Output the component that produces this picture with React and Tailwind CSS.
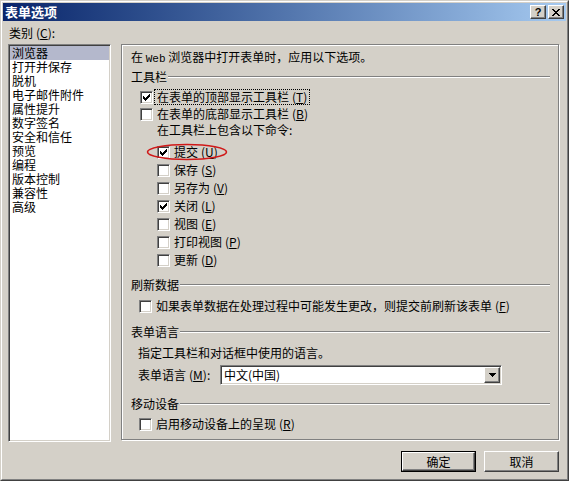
import React from 'react';

const sunken =
  'border border-t-[#808080] border-l-[#808080] border-r-white border-b-white shadow-[inset_1px_1px_0_#404040,inset_-1px_-1px_0_#d4d0c8]';
const raised =
  'border border-t-white border-l-white border-r-[#404040] border-b-[#404040] shadow-[inset_-1px_-1px_0_#808080,inset_1px_1px_0_#d4d0c8]';

const CheckMark = () => (
  <svg width="7" height="7" viewBox="0 0 7 7" shapeRendering="crispEdges">
    <path
      fill="#000"
      d="M6 0h1v1H6z M5 1h2v1H5z M0 2h1v1H0z M4 2h3v1H4z M0 3h2v1H0z M3 3h3v1H3z M0 4h5v1H0z M1 5h3v1H1z M2 6h1v1H2z"
    />
  </svg>
);

const Box = ({ checked }) => (
  <span className={`w-[13px] h-[13px] bg-white flex items-center justify-center shrink-0 ${sunken}`}>
    {checked && <CheckMark />}
  </span>
);

const Key = ({ k }) => (
  <span className="ml-[3px]">
    (<span className="underline underline-offset-[1px]">{k}</span>)
  </span>
);

const CheckRow = ({ checked, label, k, className = '', focus = false, children }) => (
  <div className={`relative h-[16px] flex items-center ${className}`}>
    {children}
    <Box checked={checked} />
    <span
      className={`ml-[2px] px-[2px] leading-[14px] whitespace-nowrap ${
        focus ? 'outline outline-1 outline-dotted outline-black' : ''
      }`}
    >
      {label}
      <Key k={k} />
    </span>
  </div>
);

const Heading = ({ text, className = '' }) => (
  <div className={`h-[14px] flex items-center ${className}`}>
    <span className="leading-[14px] whitespace-nowrap">{text}</span>
    <div className="flex-1 ml-[1px] border-t border-t-[#808080] border-b border-b-white" />
  </div>
);

const categories = [
  '浏览器',
  '打开并保存',
  '脱机',
  '电子邮件附件',
  '属性提升',
  '数字签名',
  '安全和信任',
  '预览',
  '编程',
  '版本控制',
  '兼容性',
  '高级',
];

const commands = [
  { label: '保存', k: 'S', checked: false },
  { label: '另存为', k: 'V', checked: false },
  { label: '关闭', k: 'L', checked: true },
  { label: '视图', k: 'E', checked: false },
  { label: '打印视图', k: 'P', checked: false },
  { label: '更新', k: 'D', checked: false },
];

export default function App() {
  return (
    <div className="w-[569px] h-[481px] bg-[#d4d0c8] border border-t-[#d4d0c8] border-l-[#d4d0c8] border-r-[#404040] border-b-[#404040] text-[12px] text-black font-['Noto_Sans_CJK_SC',sans-serif] select-none">
      <div className="h-full border border-t-white border-l-white border-r-[#808080] border-b-[#808080] p-[1px] flex flex-col">
        {/* title bar */}
        <div className="h-[18px] shrink-0 flex items-center pl-[2px] pr-[2px] bg-gradient-to-r from-[#0a246a] to-[#a6caf0]">
          <span className="text-white font-bold text-[13px] leading-[14px]">表单选项</span>
          <div className="ml-auto flex items-center">
            <div className={`w-[16px] h-[14px] bg-[#d4d0c8] flex items-center justify-center ${raised}`}>
              <span className="font-['Liberation_Sans',sans-serif] font-bold text-[11px] leading-[10px] text-black">?</span>
            </div>
            <div className={`ml-[2px] w-[16px] h-[14px] bg-[#d4d0c8] flex items-center justify-center ${raised}`}>
              <svg width="8" height="7" viewBox="0 0 8 7" shapeRendering="crispEdges">
                <path
                  fill="#000"
                  d="M0 0h2v1H0z M6 0h2v1H6z M1 1h2v1H1z M5 1h2v1H5z M2 2h4v1H2z M3 3h2v1H3z M2 4h4v1H2z M1 5h2v1H1z M5 5h2v1H5z M0 6h2v1H0z M6 6h2v1H6z"
                />
              </svg>
            </div>
          </div>
        </div>

        {/* body */}
        <div className="flex pl-[5px]">
          <div className="w-[103px] shrink-0">
            <div className="mt-[5px] h-[14px] leading-[14px] pl-[1px]">
              类别<Key k="C" />:
            </div>
            <div className={`mt-[4px] h-[398px] bg-white p-[1px] ${sunken}`}>
              {categories.map((c, i) => (
                <div
                  key={c}
                  className={`h-[14px] leading-[14px] pl-[2px] ${i === 0 ? 'bg-[#b4b8cc]' : ''}`}
                >
                  {c}
                </div>
              ))}
            </div>
          </div>

          <div className="ml-[10px] mt-[23px] w-[438px] h-[396px] border border-[#808080] shadow-[inset_1px_1px_0_#fff,1px_1px_0_#fff] pl-[9px] pr-[8px] pt-[5px]">
            <div className="h-[14px] leading-[14px] whitespace-nowrap">
              在 <span className="font-['Liberation_Mono',monospace] text-[11px]">Web</span> 浏览器中打开表单时，应用以下选项。
            </div>

            <Heading text="工具栏" className="mt-[6px]" />
            <CheckRow checked label="在表单的顶部显示工具栏" k="T" focus className="ml-[9px] mt-[5px]" />
            <CheckRow label="在表单的底部显示工具栏" k="B" className="ml-[9px] mt-[1px]" />
            <div className="ml-[26px] mt-[1px] h-[14px] leading-[14px]">在工具栏上包含以下命令:</div>

            <CheckRow checked label="提交" k="U" className="ml-[26px] mt-[7px]">
              <svg
                className="absolute left-[-11px] top-[-1px] pointer-events-none"
                width="82"
                height="18"
                viewBox="0 0 82 18"
              >
                <ellipse cx="41" cy="9" rx="39.5" ry="7.5" fill="none" stroke="#d01818" strokeWidth="1.6" />
              </svg>
            </CheckRow>
            {commands.map((c) => (
              <CheckRow
                key={c.label}
                checked={c.checked}
                label={c.label}
                k={c.k}
                className="ml-[26px] mt-[2px]"
              />
            ))}

            <Heading text="刷新数据" className="mt-[10px]" />
            <CheckRow
              label="如果表单数据在处理过程中可能发生更改，则提交前刷新该表单"
              k="F"
              className="ml-[8px] mt-[6px]"
            />

            <Heading text="表单语言" className="mt-[11px]" />
            <div className="ml-[7px] mt-[7px] h-[14px] leading-[14px]">指定工具栏和对话框中使用的语言。</div>
            <div className="ml-[7px] mt-[5px] h-[20px] flex items-center">
              <span className="w-[82px] shrink-0 leading-[14px]">
                表单语言<Key k="M" />:
              </span>
              <div className={`w-[282px] h-[20px] bg-white flex items-center pl-[3px] pr-[1px] ${sunken}`}>
                <span className="leading-[14px]">中文(中国)</span>
                <div className={`ml-auto w-[16px] h-[16px] bg-[#d4d0c8] flex items-center justify-center ${raised}`}>
                  <svg width="7" height="4" viewBox="0 0 7 4" shapeRendering="crispEdges">
                    <path fill="#000" d="M0 0h7v1H0z M1 1h5v1H1z M2 2h3v1H2z M3 3h1v1H3z" />
                  </svg>
                </div>
              </div>
            </div>

            <Heading text="移动设备" className="mt-[12px]" />
            <CheckRow label="启用移动设备上的呈现" k="R" className="ml-[8px] mt-[5px]" />
          </div>
        </div>

        {/* buttons */}
        <div className="mt-[9px] flex justify-end pr-[7px] gap-[8px]">
          <div className="w-[75px] h-[21px] border border-black">
            <div className={`h-full bg-[#d4d0c8] flex items-center justify-center leading-[14px] ${raised}`}>
              确定
            </div>
          </div>
          <div className={`w-[75px] h-[21px] bg-[#d4d0c8] flex items-center justify-center leading-[14px] ${raised}`}>
            取消
          </div>
        </div>
      </div>
    </div>
  );
}
